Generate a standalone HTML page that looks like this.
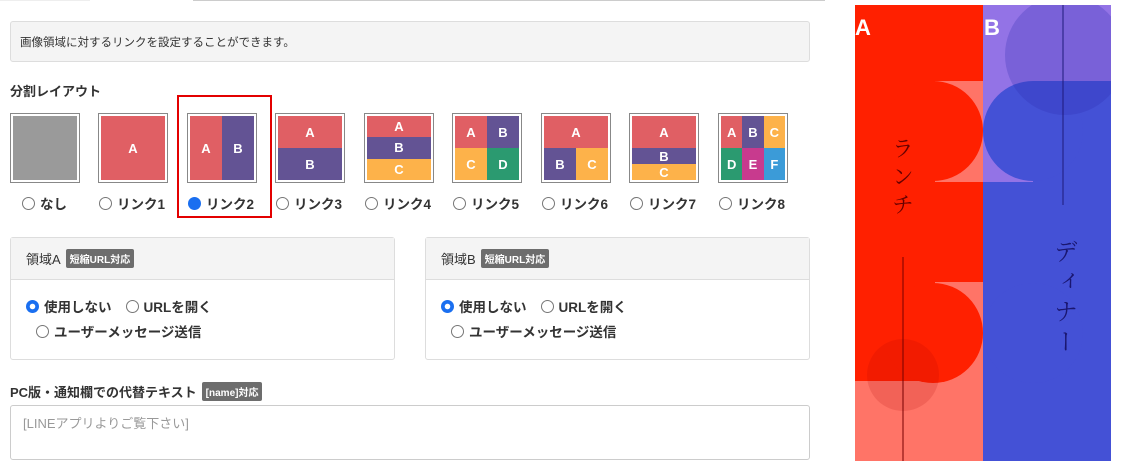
<!DOCTYPE html>
<html><head><meta charset="utf-8"><style>
*{box-sizing:border-box;margin:0;padding:0}
body{width:1124px;height:467px;background:#fff;font-family:"Liberation Sans","Noto Sans CJK JP",sans-serif;color:#333;position:relative;overflow:hidden}
.abs{position:absolute}
.info{left:10px;top:21px;width:800px;height:41px;background:#f4f4f4;border:1px solid #ddd;border-radius:3px;font-size:11.5px;padding:12px 9px;color:#333}
.h{font-size:13px;font-weight:bold}
.th{position:absolute;top:113px;width:70px;height:70px;border:1px solid #888;padding:2px;background:#fff}
.in{width:64px;height:64px;display:grid;color:#fff;font-weight:bold;font-size:13px}
.in div{display:flex;align-items:center;justify-content:center}
.r{background:#e05f64}.p{background:#635394}.o{background:#fdb24a}.g{background:#2b9a70}.m{background:#c83a8e}.b{background:#3b9bd8}
.lab{position:absolute;top:193px;font-size:13.5px;font-weight:bold;display:flex;align-items:center;white-space:nowrap}
.rad{width:13px;height:13px;border:1px solid #777;border-radius:50%;display:inline-block;margin-right:5px;background:#fff}
.rad.on{border:none;background:radial-gradient(circle,#fff 0 2.5px,#1a6ff0 3px)}
.rad.sel{border:none;background:#1a6ff0}
.panel{position:absolute;top:237px;width:385px;height:123px;border:1px solid #ddd;border-radius:3px}
.ph{height:42px;background:#f4f4f4;border-bottom:1px solid #ddd;font-size:13px;padding:12px 15px;display:flex;align-items:center}
.badge{background:#6d6d6d;color:#fff;font-size:10px;font-weight:bold;padding:2px 4px;border-radius:2px;margin-left:5px}
.opt{position:absolute;font-size:13.5px;font-weight:bold;display:flex;align-items:center;white-space:nowrap}
</style></head><body>
<div class="abs" style="left:0;top:0;width:90px;height:1px;background:#eee"></div>
<div class="abs" style="left:193px;top:0;width:632px;height:1px;background:#ccc"></div>
<div class="abs info">画像領域に対するリンクを設定することができます。</div>
<div class="abs h" style="left:10px;top:81px">分割レイアウト</div>

<div class="th" style="left:10px"><div class="in" style="background:#9a9a9a"></div></div>
<div class="th" style="left:98px"><div class="in r"><div>A</div></div></div>
<div class="th" style="left:187px"><div class="in" style="grid-template-columns:1fr 1fr"><div class="r">A</div><div class="p">B</div></div></div>
<div class="th" style="left:275px"><div class="in" style="grid-template-rows:1fr 1fr"><div class="r">A</div><div class="p">B</div></div></div>
<div class="th" style="left:364px"><div class="in" style="grid-template-rows:1fr 1fr 1fr"><div class="r">A</div><div class="p">B</div><div class="o">C</div></div></div>
<div class="th" style="left:452px"><div class="in" style="grid-template-columns:1fr 1fr;grid-template-rows:1fr 1fr"><div class="r">A</div><div class="p">B</div><div class="o">C</div><div class="g">D</div></div></div>
<div class="th" style="left:541px"><div class="in" style="grid-template-columns:1fr 1fr;grid-template-rows:1fr 1fr"><div class="r" style="grid-column:1/3">A</div><div class="p">B</div><div class="o">C</div></div></div>
<div class="th" style="left:629px"><div class="in" style="grid-template-rows:2fr 1fr 1fr"><div class="r">A</div><div class="p">B</div><div class="o">C</div></div></div>
<div class="th" style="left:718px"><div class="in" style="grid-template-columns:1fr 1fr 1fr;grid-template-rows:1fr 1fr"><div class="r">A</div><div class="p">B</div><div class="o">C</div><div class="g">D</div><div class="m">E</div><div class="b">F</div></div></div>

<div class="lab" style="left:22px"><span class="rad"></span>なし</div>
<div class="lab" style="left:99px"><span class="rad"></span>リンク1</div>
<div class="lab" style="left:188px"><span class="rad sel"></span>リンク2</div>
<div class="lab" style="left:276px"><span class="rad"></span>リンク3</div>
<div class="lab" style="left:365px"><span class="rad"></span>リンク4</div>
<div class="lab" style="left:453px"><span class="rad"></span>リンク5</div>
<div class="lab" style="left:542px"><span class="rad"></span>リンク6</div>
<div class="lab" style="left:630px"><span class="rad"></span>リンク7</div>
<div class="lab" style="left:719px"><span class="rad"></span>リンク8</div>
<div class="abs" style="left:177px;top:95px;width:95px;height:123px;border:2px solid #e30000"></div>

<div class="panel" style="left:10px"><div class="ph">領域A<span class="badge">短縮URL対応</span></div></div>
<div class="opt" style="left:26px;top:296px"><span class="rad on"></span>使用しない<span style="width:14px"></span><span class="rad"></span>URLを開く</div>
<div class="opt" style="left:36px;top:321px"><span class="rad"></span>ユーザーメッセージ送信</div>
<div class="panel" style="left:425px"><div class="ph">領域B<span class="badge">短縮URL対応</span></div></div>
<div class="opt" style="left:441px;top:296px"><span class="rad on"></span>使用しない<span style="width:14px"></span><span class="rad"></span>URLを開く</div>
<div class="opt" style="left:451px;top:321px"><span class="rad"></span>ユーザーメッセージ送信</div>

<div class="abs h" style="left:10px;top:382px;display:flex;align-items:center">PC版・通知欄での代替テキスト<span class="badge">[name]対応</span></div>
<div class="abs" style="left:10px;top:405px;width:800px;height:55px;border:1px solid #ccc;border-radius:3px;padding:7px 12px;font-size:13px;color:#999">[LINEアプリよりご覧下さい]</div>

<svg class="abs" style="left:855px;top:5px" width="256" height="456" viewBox="0 0 256 456">
<rect x="0" y="0" width="128" height="456" fill="#ff7467"/>
<rect x="128" y="0" width="128" height="456" fill="#9373e6"/>
<rect x="0" y="0" width="128" height="76" fill="#ff2000"/>
<rect x="0" y="177" width="128" height="100" fill="#ff2000"/>
<rect x="0" y="76" width="80" height="300" fill="#ff2000"/>
<circle cx="78" cy="126" r="50" fill="#ff2000"/>
<circle cx="78" cy="328" r="50" fill="#ff2000"/>
<rect x="128" y="177" width="128" height="279" fill="#4451d6"/>
<rect x="178" y="76" width="78" height="101" fill="#4451d6"/>
<rect x="178" y="278" width="78" height="101" fill="#4451d6"/>
<circle cx="178" cy="126" r="50" fill="#4451d6"/>
<circle cx="178" cy="328" r="50" fill="#4451d6"/>
<circle cx="210" cy="50" r="60" fill="#2a2ab0" opacity="0.25"/>
<circle cx="48" cy="370" r="36" fill="#a00" opacity="0.15"/>
<line x1="48" y1="252" x2="48" y2="456" stroke="#700" stroke-width="1"/>
<line x1="208" y1="0" x2="208" y2="200" stroke="#1e1a7a" stroke-width="1"/>
<text x="48" y="132" font-size="22" fill="#600" font-family="Noto Serif CJK SC,serif" style="writing-mode:tb;letter-spacing:6px">ランチ</text>
<text x="211" y="234" font-size="24" fill="#1a1670" font-family="Noto Serif CJK SC,serif" style="writing-mode:tb;letter-spacing:6px">ディナー</text>
<text x="0" y="30" font-size="22" font-weight="bold" fill="#fff" font-family="Liberation Sans,sans-serif">A</text>
<text x="129" y="30" font-size="22" font-weight="bold" fill="#fff" font-family="Liberation Sans,sans-serif">B</text>
</svg>
</body></html>
